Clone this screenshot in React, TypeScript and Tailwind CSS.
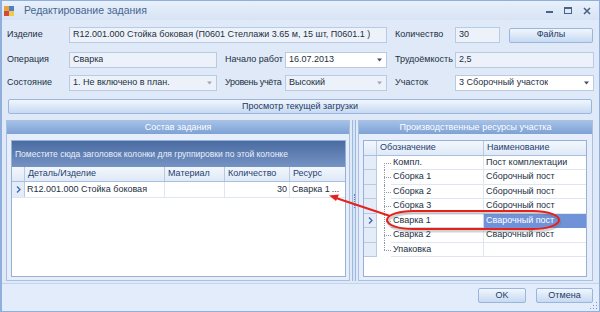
import React from "react";

function Arrow({ grey }: { grey?: boolean }) {
  return (
    <svg width="7" height="4" viewBox="0 0 7 4" className="shrink-0">
      <path d="M1 0.5h5L3.5 3.5z" fill={grey ? "#9aa8ba" : "#3b4e6b"} />
    </svg>
  );
}

function Field({
  w,
  text,
  white,
  combo,
  grey,
}: {
  w: string;
  text: string;
  white?: boolean;
  combo?: boolean;
  grey?: boolean;
}) {
  return (
    <div
      className={`${w} h-[16px] shrink-0 flex items-center justify-between px-[3px] border border-[#b8cbe5] ${
        white ? "bg-white" : "bg-[#edf2fa]"
      }`}
    >
      <span className="whitespace-nowrap overflow-hidden">{text}</span>
      {combo && <Arrow grey={grey} />}
    </div>
  );
}

function Label({ w, children }: { w: string; children: React.ReactNode }) {
  return <div className={`${w} shrink-0 whitespace-nowrap`}>{children}</div>;
}

function Btn({ w, children }: { w: string; children: React.ReactNode }) {
  return (
    <div
      className={`${w} h-[15px] flex items-center justify-center rounded-[2px] border border-[#9ab6dc] bg-gradient-to-b from-[#f1f6fd] via-[#dce8f8] to-[#c6daf3] text-[#1d3a63]`}
    >
      {children}
    </div>
  );
}

function Chevron() {
  return (
    <svg width="5" height="7" viewBox="0 0 5 7">
      <path d="M1 0.5L4 3.5L1 6.5" stroke="#3b66b0" strokeWidth="1.3" fill="none" />
    </svg>
  );
}

const resources = [
  { code: "Компл.", name: "Пост комплектации" },
  { code: "Сборка 1", name: "Сборочный пост" },
  { code: "Сборка 2", name: "Сборочный пост" },
  { code: "Сборка 3", name: "Сборочный пост" },
  { code: "Сварка 1", name: "Сварочный пост", selected: true },
  { code: "Сварка 2", name: "Сварочный пост" },
  { code: "Упаковка", name: "" },
];

export default function App() {
  return (
    <div className="w-[600px] h-[312px] relative overflow-hidden flex flex-col bg-[#dfe9f7] border border-[#8fb0dc] border-l-2 font-['Liberation_Sans',Arial,sans-serif] text-[9px] text-[#22303f]">
      {/* title bar */}
      <div className="h-[19px] shrink-0 flex items-center bg-gradient-to-b from-[#e8f0fb] to-[#d7e4f5]">
        <svg width="10" height="10" viewBox="0 0 10 10" className="ml-[2px]">
          <rect x="0" y="0" width="5" height="5" fill="#e8a33a" />
          <rect x="5" y="0" width="5" height="5" fill="#4f7fc6" />
          <rect x="0" y="5" width="5" height="5" fill="#d24a3a" />
          <rect x="5" y="5" width="5" height="5" fill="#f1c94c" />
        </svg>
        <span className="ml-[10px] text-[10.5px] text-[#46668f]">Редактирование задания</span>
        <div className="flex-1" />
        <div className="flex items-center gap-[11px] mr-[8px] text-[#4b6288]">
          <div className="w-[7px] h-[2px] bg-[#4b6288] mt-[3px]" />
          <div className="w-[8px] h-[7px] border border-[#4b6288] border-t-2" />
          <svg width="8" height="8" viewBox="0 0 8 8">
            <path d="M1 1L7 7M7 1L1 7" stroke="#4b6288" strokeWidth="1.6" />
          </svg>
        </div>
      </div>

      <div className="flex-1 flex flex-col pl-[4px] pr-[6px]">
        {/* form */}
        <div className="flex items-center mt-[7px]">
          <Label w="w-[63px] pl-[1px]">Изделие</Label>
          <Field w="w-[318px]" text="R12.001.000 Стойка боковая (П0601 Стеллажи 3.65 м, 15 шт, П0601.1 )" />
          <Label w="w-[60px] ml-[8px]">Количество</Label>
          <Field w="w-[45px]" text="30" />
          <div className="ml-[9px]">
            <Btn w="w-[84px]">Файлы</Btn>
          </div>
        </div>
        <div className="flex items-center mt-[9px]">
          <Label w="w-[63px] pl-[1px]">Операция</Label>
          <Field w="w-[148px]" text="Сварка" />
          <Label w="w-[60px] ml-[8px]">Начало работ</Label>
          <Field w="w-[102px]" text="16.07.2013" white combo />
          <Label w="w-[60px] ml-[8px]">Трудоёмкость</Label>
          <Field w="w-[139px]" text="2,5" />
        </div>
        <div className="flex items-center mt-[7px]">
          <Label w="w-[63px] pl-[1px]">Состояние</Label>
          <Field w="w-[148px]" text="1. Не включено в план." combo grey />
          <Label w="w-[60px] ml-[8px] tracking-[-0.3px]">Уровень учёта</Label>
          <Field w="w-[102px]" text="Высокий" combo grey />
          <Label w="w-[60px] ml-[8px]">Участок</Label>
          <Field w="w-[139px]" text="3 Сборочный участок" white combo />
        </div>
        <div className="mt-[8px] ml-[2px]">
          <Btn w="w-[584px]">Просмотр текущей загрузки</Btn>
        </div>

        {/* panels */}
        <div className="flex mt-[6px] h-[161px]">
          {/* left */}
          <div className="w-[344px] flex flex-col border border-[#a9c0e0] bg-[#e5eefa]">
            <div className="h-[13px] shrink-0 flex items-center justify-center bg-gradient-to-b from-[#a4c0e7] to-[#7ea2d5] text-white">
              Состав задания
            </div>
            <div className="flex-1 pt-[6px] pl-[4px] pr-[3px] pb-[3px]">
              <div className="h-full border border-[#97b1d6] bg-white flex flex-col">
                <div className="h-[26px] shrink-0 flex items-center pl-[3px] bg-gradient-to-b from-[#4a6ba2] to-[#7693c3] text-[#e9f0fb] text-[8.5px] whitespace-nowrap">
                  Поместите сюда заголовок колонки для группировки по этой колонке
                </div>
                <div className="h-[15px] shrink-0 flex bg-gradient-to-b from-[#f3f7fd] to-[#dfe9f7] border-b border-[#a9bfdf] text-[#1e3f6e]">
                  <div className="w-[13px] border-r border-[#b7c9e3]" />
                  <div className="w-[140px] border-r border-[#b7c9e3] pl-[3px] flex items-center">Деталь/Изделие</div>
                  <div className="w-[60px] border-r border-[#b7c9e3] pl-[3px] flex items-center">Материал</div>
                  <div className="w-[65px] border-r border-[#b7c9e3] pl-[3px] flex items-center">Количество</div>
                  <div className="flex-1 pl-[3px] flex items-center">Ресурс</div>
                </div>
                <div className="h-[16px] shrink-0 flex border-b border-[#dfe6f1]">
                  <div className="w-[13px] border-r border-[#b7c9e3] bg-[#e4ecf8] flex items-center justify-center">
                    <Chevron />
                  </div>
                  <div className="w-[140px] border-r border-[#dfe6f1] pl-[2px] flex items-center whitespace-nowrap">R12.001.000 Стойка боковая</div>
                  <div className="w-[60px] border-r border-[#dfe6f1]" />
                  <div className="w-[65px] border-r border-[#dfe6f1] pr-[2px] flex items-center justify-end">30</div>
                  <div className="flex-1 pl-[2px] flex items-center whitespace-nowrap overflow-hidden">
                    Сварка 1<span className="ml-[2px]">...</span>
                  </div>
                </div>
              </div>
            </div>
          </div>

          {/* splitter */}
          <div className="w-[8px] shrink-0 flex justify-center">
            <div className="w-[4px] h-full border-l border-r border-[#9fb9de] bg-[#d6e3f5] flex items-center justify-center">
              <div className="w-[1px] h-[14px] border-l border-dotted border-[#5d7fb3]" />
            </div>
          </div>

          {/* right */}
          <div className="flex-1 flex flex-col border border-[#a9c0e0] bg-[#e5eefa]">
            <div className="h-[13px] shrink-0 flex items-center justify-center bg-gradient-to-b from-[#a4c0e7] to-[#7ea2d5] text-white">
              Производственные ресурсы участка
            </div>
            <div className="flex-1 pt-[6px] pl-[4px] pr-[5px] pb-[3px]">
              <div className="h-full border border-[#97b1d6] bg-white flex flex-col">
                <div className="h-[15px] shrink-0 flex bg-gradient-to-b from-[#f3f7fd] to-[#dfe9f7] border-b border-[#a9bfdf] text-[#1e3f6e]">
                  <div className="w-[13px] border-r border-[#b7c9e3]" />
                  <div className="w-[107px] border-r border-[#b7c9e3] pl-[3px] flex items-center">Обозначение</div>
                  <div className="flex-1 pl-[3px] flex items-center">Наименование</div>
                </div>
                {resources.map((r, i) => (
                  <div key={r.code} className={`${i % 2 === 1 ? "h-[15px]" : "h-[14px]"} shrink-0 flex`}>
                    <div className="w-[13px] border-r border-b border-[#b7c9e3] bg-[#e4ecf8] flex items-center justify-center">
                      {r.selected && <Chevron />}
                    </div>
                    <div className="w-[14px] relative">
                      <div
                        className={`absolute left-[7px] w-0 border-l border-dotted border-[#8a99ad] ${
                          i === 0 ? "top-[7px] bottom-0" : i === resources.length - 1 ? "top-0 h-[7px]" : "top-0 bottom-0"
                        }`}
                      />
                      <div className="absolute left-[7px] top-[7px] w-[7px] h-0 border-t border-dotted border-[#8a99ad]" />
                    </div>
                    <div
                      className={`w-[93px] border-r border-b pl-[2px] flex items-center whitespace-nowrap ${
                        r.selected ? "border-[#c9d6ea]" : "border-[#dfe6f1]"
                      }`}
                    >
                      {r.code}
                    </div>
                    <div
                      className={`flex-1 pl-[2px] flex items-center whitespace-nowrap border-b ${
                        r.selected ? "bg-[#7092d9] text-white border-[#7092d9]" : "border-[#dfe6f1]"
                      }`}
                    >
                      {r.name}
                    </div>
                  </div>
                ))}
              </div>
            </div>
          </div>
        </div>
      </div>

      {/* footer */}
      <div className="h-[28px] shrink-0 flex items-start pt-[4px] justify-end gap-[10px] pr-[6px] border-t border-[#c3d5ee] bg-[#e2ecfa]">
        <Btn w="w-[48px]">OK</Btn>
        <Btn w="w-[57px]">Отмена</Btn>
      </div>
      <svg width="8" height="8" viewBox="0 0 8 8" className="absolute right-[1px] bottom-[1px]">
        <g fill="#7f97b8">
          <rect x="6" y="0" width="1" height="1" />
          <rect x="3" y="3" width="1" height="1" />
          <rect x="6" y="3" width="1" height="1" />
          <rect x="0" y="6" width="1" height="1" />
          <rect x="3" y="6" width="1" height="1" />
          <rect x="6" y="6" width="1" height="1" />
        </g>
      </svg>

      {/* annotation */}
      <svg width="600" height="312" viewBox="0 0 600 312" className="absolute left-0 top-0 pointer-events-none">
        <rect x="386" y="212" width="172" height="18" rx="26" ry="9" fill="none" stroke="#6d6d6d" strokeOpacity="0.3" strokeWidth="3" />
        <rect x="385" y="210" width="172" height="18" rx="26" ry="9" fill="none" stroke="#e8201c" strokeWidth="2" />
        <line x1="388" y1="215" x2="334" y2="197" stroke="#e8201c" strokeWidth="2" />
        <path d="M327 194.5L337 193.5L334 200z" fill="#e8201c" />
      </svg>
    </div>
  );
}
